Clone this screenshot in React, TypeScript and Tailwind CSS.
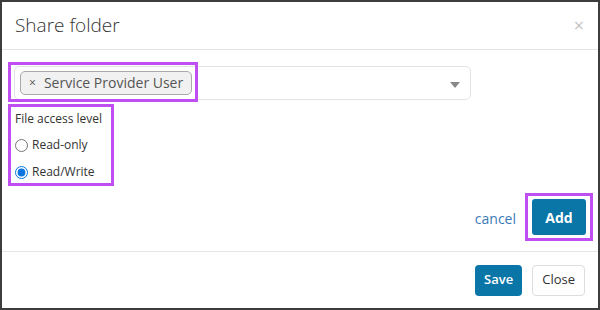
import { useState } from 'react';

export default function App() {
  const [access, setAccess] = useState<'ro' | 'rw'>('rw');

  return (
    <div className="w-[600px] h-[310px] bg-white border-2 border-[#3d3d3d] flex flex-col text-[#333] font-['Open_Sans',sans-serif]">
      {/* header */}
      <div className="h-[48px] shrink-0 flex items-center justify-between pl-[13px] pr-[14px] border-b border-[#e5e5e5]">
        <h1 className="text-[19px] font-light leading-none text-[#333]">Share folder</h1>
        <span className="text-[18px] leading-none text-[#c4c4c4] mt-[-2px]">×</span>
      </div>

      {/* body */}
      <div className="flex-1 flex flex-col px-[6px] pt-[16px]">
        <div className="relative w-[457px] h-[34px] ml-[6px] border border-[#e3e3e3] rounded-[5px] flex items-center">
          <div className="absolute left-[-7px] top-[-5px] w-[190px] h-[40px] border-[3px] border-[#bf4ff3]" />
          <div className="ml-[5px] h-[24px] px-[8px] flex items-center gap-[8px] bg-[#f1f1f1] border border-[#aaa] rounded-[5px] text-[14px] text-[#555]">
            <span className="text-[12px] leading-none">×</span>
            <span className="leading-none">Service Provider User</span>
          </div>
          <svg className="absolute right-[10px] top-[15px]" width="10" height="6" viewBox="0 0 10 6">
            <path d="M0 0 L10 0 L5 6 Z" fill="#888" />
          </svg>
        </div>

        <div className="mt-[4px] w-[106px] h-[82px] border-[3px] border-[#bf4ff3] pl-[4px] pt-[3px] text-[12px]">
          <div className="leading-[17px]">File access level</div>
          <label className="flex items-center gap-[4px] mt-[10px] leading-[16px]">
            <input
              type="radio"
              name="access"
              className="w-[13px] h-[13px] m-0 accent-[#0a75e0]"
              checked={access === 'ro'}
              onChange={() => setAccess('ro')}
            />
            <span>Read-only</span>
          </label>
          <label className="flex items-center gap-[4px] mt-[11px] leading-[16px]">
            <input
              type="radio"
              name="access"
              className="w-[13px] h-[13px] m-0 accent-[#0a75e0]"
              checked={access === 'rw'}
              onChange={() => setAccess('rw')}
            />
            <span>Read/Write</span>
          </label>
        </div>

        <div className="flex items-center justify-end mt-[7px] pr-[-1px] mr-[-1px]">
          <a className="text-[14px] text-[#3a7ab5] mr-[9px] mt-[3px]">cancel</a>
          <div className="border-[3px] border-[#bf4ff3] px-[4px] py-[3px]">
            <button className="w-[54px] h-[36px] bg-[#0a76a8] rounded-[3px] text-white text-[14px] font-bold">
              Add
            </button>
          </div>
        </div>
      </div>

      {/* footer */}
      <div className="h-[57px] shrink-0 border-t border-[#e5e5e5] flex items-center justify-end gap-[10px] pr-[13px]">
        <button className="h-[31px] px-[9px] bg-[#0a76a8] rounded-[4px] text-white text-[13px] font-semibold">
          Save
        </button>
        <button className="h-[31px] px-[9px] bg-white border border-[#ddd] rounded-[4px] text-[#333] text-[13px]">
          Close
        </button>
      </div>
    </div>
  );
}
